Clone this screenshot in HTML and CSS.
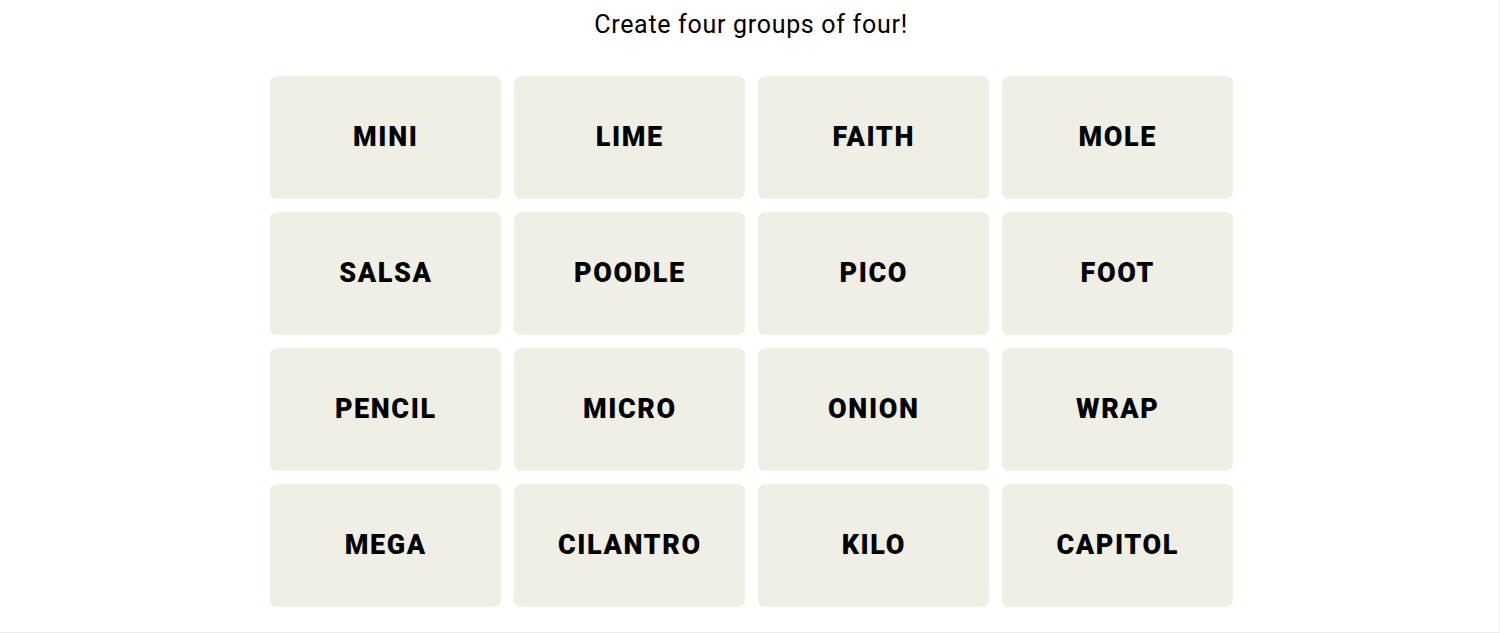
FILE: index.html
```html
<!DOCTYPE html>
<html lang="en">
<head>
<meta charset="utf-8">
<title>Connections</title>
<link rel="stylesheet" href="styles.css">
</head>
<body>
<main class="page">
  <h1 class="prompt">Create four groups of four!</h1>
  <div class="board">
    <div class="tile">MINI</div>
    <div class="tile">LIME</div>
    <div class="tile">FAITH</div>
    <div class="tile">MOLE</div>
    <div class="tile">SALSA</div>
    <div class="tile">POODLE</div>
    <div class="tile">PICO</div>
    <div class="tile">FOOT</div>
    <div class="tile">PENCIL</div>
    <div class="tile">MICRO</div>
    <div class="tile">ONION</div>
    <div class="tile">WRAP</div>
    <div class="tile">MEGA</div>
    <div class="tile">CILANTRO</div>
    <div class="tile">KILO</div>
    <div class="tile">CAPITOL</div>
  </div>
</main>
</body>
</html>
```
FILE: styles.css
```css
* { box-sizing: border-box; }
html, body { margin: 0; padding: 0; background: #fff; }
.page {
  width: 1500px;
  height: 633px;
  border-right: 1px solid #ececec;
  border-bottom: 1px solid #ececec;
  display: flex;
  flex-direction: column;
  align-items: center;
  padding-left: 3px;
  font-family: "Roboto", "Liberation Sans", sans-serif;
  color: #000;
}
.prompt {
  margin: 9px 0 0 0;
  height: 67px;
  font-size: 25px;
  line-height: 32px;
  font-weight: 400;
  letter-spacing: 0.7px;
}
.board {
  display: grid;
  grid-template-columns: repeat(4, 231px);
  grid-auto-rows: 123px;
  gap: 13px;
}
.tile {
  background: #efefe6;
  border-radius: 7px;
  display: flex;
  align-items: center;
  justify-content: center;
  font-size: 27px;
  font-weight: 900;
  letter-spacing: 1.6px;
  text-transform: uppercase;
  padding: 0 0 2px 1.6px;
}
```
